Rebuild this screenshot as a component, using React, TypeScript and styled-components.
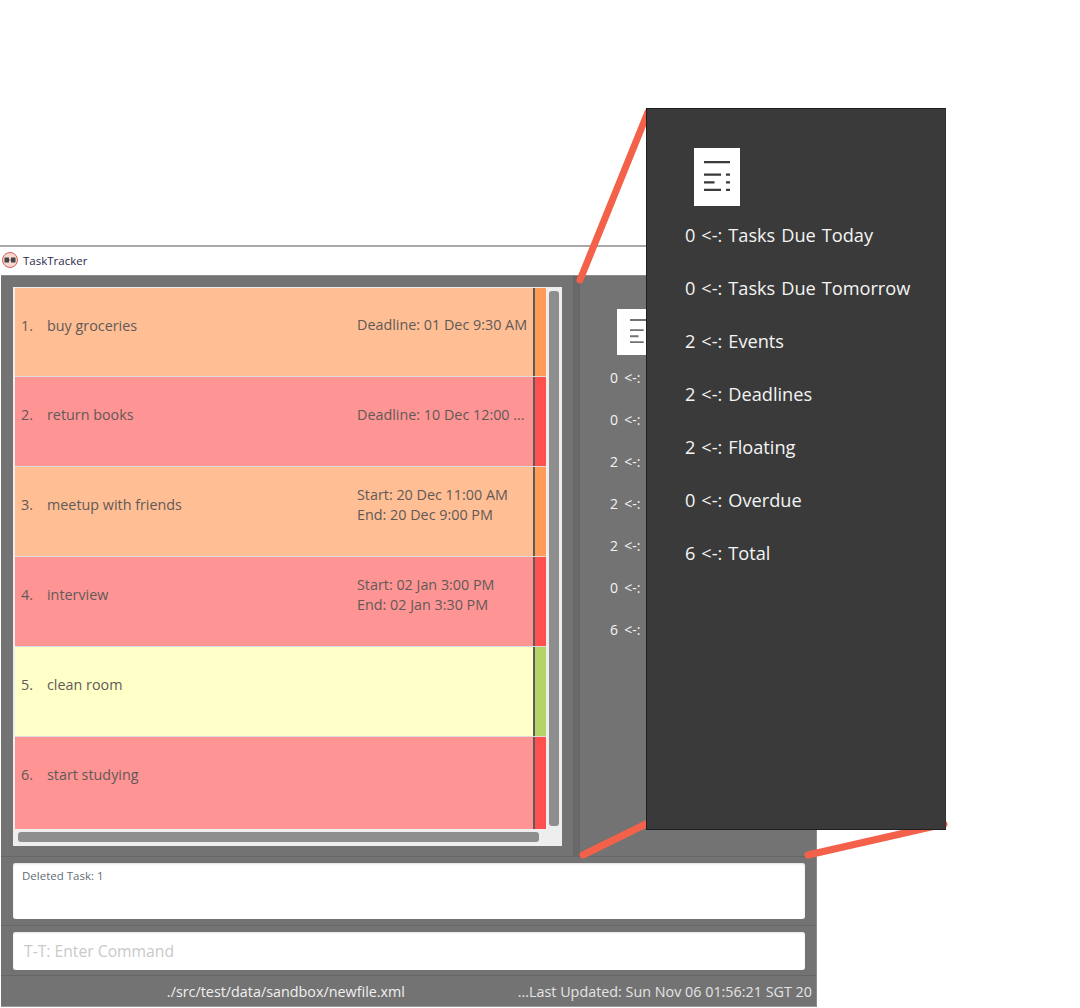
import React from 'react'
import styled, { createGlobalStyle } from 'styled-components'

const GlobalStyle = createGlobalStyle`
  html, body {
    margin: 0;
    padding: 0;
    background: #fff;
    font-family: "Open Sans", "Noto Sans", "Liberation Sans", sans-serif;
  }
  * { box-sizing: border-box; }
`

const Page = styled.div`
  position: relative;
  width: 1080px;
  height: 1008px;
  padding-top: 245px;
  overflow: hidden;
`

const Window = styled.div`
  width: 817px;
  height: 762px;
  display: flex;
  flex-direction: column;
`

const TitleBar = styled.div`
  height: 30px;
  flex: none;
  display: flex;
  align-items: center;
  gap: 5px;
  padding: 0 2px 2px;
  background: #fff;
  border-top: 2px solid #a8a8a8;
  font-size: 11.5px;
  color: #2b2b4a;
`

const Body = styled.div`
  flex: 1;
  margin-left: 1px;
  display: flex;
  flex-direction: column;
  background: #737373;
  border-top: 1px solid #8c8c8c;
  border-bottom: 1px solid #999;
  border-right: 1px solid #8a8a8a;
`

const Main = styled.div`
  height: 580px;
  flex: none;
  display: flex;
`

const ListPane = styled.div`
  width: 572px;
  flex: none;
  padding: 11px 11px 10px 12px;
`

const Divider = styled.div`
  width: 7px;
  flex: none;
  background: #696969;
  border-left: 1px solid #666;
  border-right: 1px solid #666;
`

const StatsPane = styled.div`
  flex: 1;
  padding: 33px 0 0 37px;
`

const ListFrame = styled.div`
  height: 100%;
  display: grid;
  grid-template-columns: 1fr 16px;
  grid-template-rows: 1fr 16px;
  background: #eeeeee;
  padding: 1px 0 0 2px;
`

const Rows = styled.div`
  display: flex;
  flex-direction: column;
  min-height: 0;
`

const Row = styled.div<{ $bg: string; $band: string; $height: number; $last?: boolean }>`
  height: ${p => p.$height}px;
  flex: none;
  display: flex;
  align-items: center;
  background: ${p => p.$bg};
  border-bottom: ${p => (p.$last ? 'none' : '1px solid #dcdcdc')};
  color: #5f5a58;
  font-size: 14.35px;
  position: relative;
  padding-right: 11px;
  padding-bottom: ${p => (p.$last ? '4px' : '0')};
  &::after {
    content: '';
    position: absolute;
    right: 0;
    top: 0;
    bottom: 0;
    width: 11px;
    background: ${p => p.$band};
    border-left: 2px solid #5b5b5b;
  }
`

const RowIndex = styled.span`
  width: 32px;
  flex: none;
  padding-left: 6px;
  margin-top: -14px;
`

const RowName = styled.span`
  flex: 1;
  margin-top: -14px;
`

const RowDates = styled.div`
  width: 178px;
  flex: none;
  line-height: 20px;
  margin-top: -14px;
  white-space: nowrap;
`

const VScroll = styled.div`
  grid-row: 1;
  grid-column: 2;
  padding: 3px 3px 4px 3px;
`

const HScroll = styled.div`
  grid-row: 2;
  grid-column: 1;
  padding: 2px 7px 4px 3px;
`

const Thumb = styled.div`
  width: 100%;
  height: 100%;
  background: #8e8e8e;
  border-radius: 3px;
`

const CommandSection = styled.div<{ $height: number; $pad: number }>`
  height: ${p => p.$height}px;
  flex: none;
  padding: ${p => p.$pad}px 11px 0 12px;
  border-top: 1px solid #666;
`

const ResultBox = styled.div`
  height: 56px;
  background: #fff;
  border-radius: 3px;
  padding: 5px 9px;
  font-size: 11.5px;
  line-height: 15px;
  color: #626e76;
  box-shadow: inset 0 1px 2px #ddd;
`

const CommandBox = styled.div`
  height: 38px;
  background: #fff;
  border-radius: 3px;
  padding: 0 11px;
  display: flex;
  align-items: center;
  font-size: 15.7px;
  color: #c9c9c9;
  box-shadow: inset 0 1px 2px #e4e4e4;
`

const StatusBar = styled.div`
  flex: 1;
  display: flex;
  align-items: center;
  border-top: 1px solid #666;
  color: #f0f0f0;
  font-size: 14.35px;
  white-space: nowrap;
`

const StatusLeft = styled.div`
  width: 404px;
  text-align: right;
  flex: none;
`

const StatusRight = styled.div`
  flex: 1;
  text-align: right;
  padding-right: 4px;
  overflow: hidden;
  color: #e4e4e4;
`

const DocCard = styled.div<{ $w: number; $h: number; $lift: number }>`
  width: ${p => p.$w}px;
  height: ${p => p.$h}px;
  background: #fff;
  display: flex;
  align-items: center;
  justify-content: center;
  padding-bottom: ${p => p.$lift}px;
`

const StatsSmall = styled.div`
  margin-top: 2px;
  margin-left: -7px;
`

const StatLine = styled.div<{ $pitch: number; $size: number; $spacing: number }>`
  height: ${p => p.$pitch}px;
  line-height: ${p => p.$pitch}px;
  font-size: ${p => p.$size}px;
  word-spacing: ${p => p.$spacing}px;
  color: #f4f4f4;
  white-space: nowrap;
`

const ZoomPanel = styled.div`
  position: absolute;
  left: 646px;
  top: 108px;
  width: 300px;
  height: 722px;
  background: #3a3a3a;
  border: 1px solid #1e1e1e;
  border-right-color: #333;
  padding: 39px 0 0 47px;
  z-index: 2;
`

const ZoomStats = styled.div`
  margin: 3px 0 0 -9px;
`

const Callouts = styled.svg`
  position: absolute;
  left: 0;
  top: 0;
  z-index: 1;
`

const tasks = [
  { name: 'buy groceries', dates: ['Deadline: 01 Dec 9:30 AM'], bg: '#ffbe94', band: '#ff9c58', height: 89 },
  { name: 'return books', dates: ['Deadline: 10 Dec 12:00 ...'], bg: '#ff9494', band: '#ff5050', height: 90 },
  { name: 'meetup with friends', dates: ['Start: 20 Dec 11:00 AM', 'End: 20 Dec 9:00 PM'], bg: '#ffbe94', band: '#ff9c58', height: 90 },
  { name: 'interview', dates: ['Start: 02 Jan 3:00 PM', 'End: 02 Jan 3:30 PM'], bg: '#ff9494', band: '#ff5050', height: 90 },
  { name: 'clean room', dates: [], bg: '#ffffc8', band: '#b4d468', height: 90 },
  { name: 'start studying', dates: [], bg: '#ff9494', band: '#ff5050', height: 92 },
]

const stats = [
  '0 <-: Tasks Due Today',
  '0 <-: Tasks Due Tomorrow',
  '2 <-: Events',
  '2 <-: Deadlines',
  '2 <-: Floating',
  '0 <-: Overdue',
  '6 <-: Total',
]

function DocIcon({ color, size }: { color: string; size: number }) {
  return (
    <svg width={size} height={size * 30 / 26} viewBox="0 0 26 30" fill="none" stroke={color} strokeWidth="2.3">
      <path d="M0 1.2h26M0 13.7h17M22 13.7h4M0 21.4h10.5M22 21.4h4M0 28.8h17M22 28.8h4" />
    </svg>
  )
}

function AppIcon() {
  return (
    <svg width="16" height="16" viewBox="0 0 16 16">
      <circle cx="8" cy="8" r="7.5" fill="#f6d8d2" stroke="#d8604f" strokeWidth="1" />
      <rect x="2.5" y="5.5" width="4.5" height="5" fill="#444" />
      <rect x="9" y="5.5" width="4.5" height="5" fill="#444" />
      <rect x="7" y="7.5" width="2" height="1" fill="#777" />
    </svg>
  )
}

export default function App() {
  return (
    <Page>
      <GlobalStyle />
      <Window>
        <TitleBar>
          <AppIcon />
          TaskTracker
        </TitleBar>
        <Body>
          <Main>
            <ListPane>
              <ListFrame>
                <Rows>
                  {tasks.map((t, i) => (
                    <Row key={t.name} $bg={t.bg} $band={t.band} $height={t.height} $last={i === tasks.length - 1}>
                      <RowIndex>{i + 1}.</RowIndex>
                      <RowName>{t.name}</RowName>
                      {t.dates.length > 0 && (
                        <RowDates>
                          {t.dates.map(d => <div key={d}>{d}</div>)}
                        </RowDates>
                      )}
                    </Row>
                  ))}
                </Rows>
                <VScroll><Thumb /></VScroll>
                <HScroll><Thumb /></HScroll>
              </ListFrame>
            </ListPane>
            <Divider />
            <StatsPane>
              <DocCard $w={46} $h={46} $lift={2}>
                <DocIcon color="#737373" size={21} />
              </DocCard>
              <StatsSmall>
                {stats.map(s => (
                  <StatLine key={s} $pitch={42} $size={14} $spacing={2.5}>{s}</StatLine>
                ))}
              </StatsSmall>
            </StatsPane>
          </Main>
          <CommandSection $height={69} $pad={6}>
            <ResultBox>Deleted Task: 1</ResultBox>
          </CommandSection>
          <CommandSection $height={50} $pad={6}>
            <CommandBox>T-T: Enter Command</CommandBox>
          </CommandSection>
          <StatusBar>
            <StatusLeft>./src/test/data/sandbox/newfile.xml</StatusLeft>
            <StatusRight>...Last Updated: Sun Nov 06 01:56:21 SGT 20</StatusRight>
          </StatusBar>
        </Body>
      </Window>
      <Callouts width="1080" height="1008" fill="none" stroke="#f4614a" strokeLinecap="round" strokeWidth="7">
        <path d="M580 280L648 112" />
        <path d="M583 855L648 823" />
        <path d="M808 855L944 824" />
      </Callouts>
      <ZoomPanel>
        <DocCard $w={46} $h={58} $lift={3}>
          <DocIcon color="#3a3a3a" size={26} />
        </DocCard>
        <ZoomStats>
          {stats.map(s => (
            <StatLine key={s} $pitch={53} $size={18.2} $spacing={1.2}>{s}</StatLine>
          ))}
        </ZoomStats>
      </ZoomPanel>
    </Page>
  )
}
